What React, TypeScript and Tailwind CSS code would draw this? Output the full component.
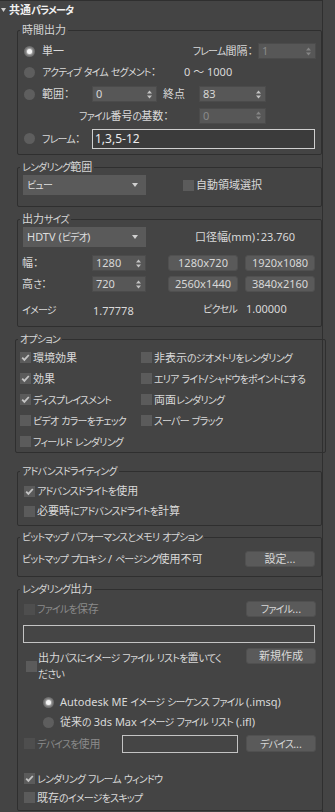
import React from "react";

function J({ s }: { s: string }) {
  const parts = s.split(/([\u3040-\u30FF]+)/);
  return (
    <>
      {parts.map((p, i) =>
        /[\u3040-\u30FF]/.test(p) ? (
          <span key={i} className="text-[10px] tracking-[-0.8px]">
            {p}
          </span>
        ) : (
          <React.Fragment key={i}>{p}</React.Fragment>
        )
      )}
    </>
  );
}

function Arrows({ dim }: { dim?: boolean }) {
  return (
    <svg width="5" height="9" viewBox="0 0 5 9" className="shrink-0">
      <polygon points="0,3.5 2.5,0.5 5,3.5" fill={dim ? "#858585" : "#c4c4c4"} />
      <polygon points="0,5.5 2.5,8.5 5,5.5" fill={dim ? "#858585" : "#c4c4c4"} />
    </svg>
  );
}

function Spin({ cls, value, dim }: { cls: string; value: string; dim?: boolean }) {
  return (
    <div
      className={`${cls} shrink-0 h-[16px] bg-[#575757] border border-[#4b4b4b] flex items-center justify-between pl-[3px] pr-[4px] ${
        dim ? "text-[#8a8a8a]" : "text-[#d8d8d8]"
      }`}
    >
      <span>{value}</span>
      <Arrows dim={dim} />
    </div>
  );
}

function Drop({ text }: { text: string }) {
  return (
    <div className="w-[123px] h-[20px] shrink-0 bg-[#5a5a5a] flex items-center justify-between pl-[4px] pr-[8px] text-[#dedede]">
      <span className="whitespace-nowrap">
        <J s={text} />
      </span>
      <svg width="6" height="4" viewBox="0 0 6 4">
        <polygon points="0,0 6,0 3,4" fill="#d0d0d0" />
      </svg>
    </div>
  );
}

function Btn({ cls, text }: { cls?: string; text: string }) {
  return (
    <div
      className={`${cls ?? ""} w-[70px] h-[16px] shrink-0 rounded-[3px] bg-[#5a5a5a] border border-[#505050] flex items-center justify-center text-[#d8d8d8] whitespace-nowrap`}
    >
      <J s={text} />
    </div>
  );
}

function Check({ on, dim, cls }: { on?: boolean; dim?: boolean; cls?: string }) {
  return (
    <div
      className={`${cls ?? ""} w-[11px] h-[11px] shrink-0 flex items-center justify-center ${
        dim ? "bg-[#4e4e4e]" : "bg-[#5b5b5b]"
      }`}
    >
      {on && (
        <svg width="11" height="11" viewBox="0 0 11 11">
          <polyline points="2.2,5.6 4.4,7.9 8.8,3" fill="none" stroke="#c4c4c4" strokeWidth="1.8" />
        </svg>
      )}
    </div>
  );
}

function Radio({ on }: { on?: boolean }) {
  return on ? (
    <div className="w-[11px] h-[11px] shrink-0 rounded-full bg-[#6b6b6b] flex items-center justify-center">
      <div className="w-[5px] h-[5px] rounded-full bg-[#f4f4f4] shadow-[0_0_2px_1px_rgba(255,255,255,0.55)]" />
    </div>
  ) : (
    <div className="w-[11px] h-[11px] shrink-0 rounded-full bg-[#5e5e5e]" />
  );
}

function Group({ title, cls, children }: { title: string; cls: string; children: React.ReactNode }) {
  return (
    <fieldset className={`block border border-[#2f2f2f] rounded-[2px] ${cls}`}>
      <legend className="ml-[2px] px-[2px] leading-[14px] text-[#d6d6d6] whitespace-nowrap">
        <J s={title} />
      </legend>
      {children}
    </fieldset>
  );
}

function L({ s, cls }: { s: string; cls?: string }) {
  return (
    <span className={`${cls ?? ""} whitespace-nowrap`}>
      <J s={s} />
    </span>
  );
}

function CRow({ on, dim, label, h }: { on?: boolean; dim?: boolean; label: string; h: string }) {
  return (
    <div className={`${h} flex items-center`}>
      <Check on={on} dim={dim} />
      <L s={label} cls={`ml-[2px] ${dim ? "text-[#8a8a8a]" : ""}`} />
    </div>
  );
}

export default function App() {
  return (
    <div className="w-[335px] h-[812px] overflow-hidden bg-[#444444] flex items-start text-[11px] leading-[14px] text-[#d9d9d9] font-['Noto_Sans','Noto_Sans_CJK_JP',sans-serif] [font-feature-settings:'palt']">
      <div className="w-[323px] h-[812px] shrink-0 border-r border-t border-[#2f2f2f]">
        {/* title */}
        <div className="h-[22px] pt-[2px]">
          <div className="h-[14px] flex items-center pl-[1px]">
            <svg width="5" height="4" viewBox="0 0 5 4">
              <polygon points="0,0 5,0 2.5,4" fill="#cfcfcf" />
            </svg>
            <L s="共通パラメータ" cls="ml-[3px] font-bold text-[#f0f0f0]" />
          </div>
        </div>

        {/* 時間出力 */}
        <Group title="時間出力" cls="ml-[17px] w-[305px]">
          <div className="pt-[4px] pb-[3px]">
            <div className="h-[20px] flex items-center pl-[6px] pr-[5px]">
              <Radio on />
              <L s="単一" cls="ml-[7px]" />
              <L s="フレーム間隔：" cls="ml-auto" />
              <Spin cls="w-[58px] ml-[5px]" value="1" dim />
            </div>
            <div className="h-[22px] flex items-center pl-[6px]">
              <Radio />
              <L s="アクティブ タイム セグメント：" cls="ml-[7px] w-[142px] shrink-0" />
              <span className="whitespace-nowrap">0 〜 1000</span>
            </div>
            <div className="h-[22px] flex items-center pl-[6px]">
              <Radio />
              <L s="範囲：" cls="ml-[7px] w-[50px] shrink-0" />
              <Spin cls="w-[65px]" value="0" />
              <L s="終点" cls="ml-[6px] w-[36px] shrink-0" />
              <Spin cls="w-[67px]" value="83" />
            </div>
            <div className="h-[21px] flex items-center pl-[61px]">
              <L s="ファイル番号の基数：" cls="w-[120px] shrink-0" />
              <Spin cls="w-[67px]" value="0" dim />
            </div>
            <div className="h-[25px] flex items-center pl-[6px]">
              <Radio />
              <L s="フレーム：" cls="ml-[7px] w-[50px] shrink-0" />
              <div className="w-[223px] h-[20px] shrink-0 bg-[#3b3b3b] border border-[#cfcfcf] pl-[2px] flex items-center text-[#ececec] text-[12px]">
                1,3,5-12
              </div>
            </div>
          </div>
        </Group>

        {/* レンダリング範囲 */}
        <Group title="レンダリング範囲" cls="ml-[17px] w-[305px] mt-[5px]">
          <div className="pt-[1px] pb-[11px] pl-[5px] flex items-center">
            <Drop text="ビュー" />
            <Check cls="ml-[37px]" />
            <L s="自動領域選択" cls="ml-[2px]" />
          </div>
        </Group>

        {/* 出力サイズ */}
        <Group title="出力サイズ" cls="ml-[17px] w-[305px] mt-[5px]">
          <div className="pt-[1px] pb-[10px]">
            <div className="flex items-center pl-[5px]">
              <Drop text="HDTV (ビデオ)" />
              <L s="口径幅(mm)：23.760" cls="ml-[49px]" />
            </div>
            <div className="mt-[8px] h-[16px] flex items-center pl-[4px]">
              <L s="幅：" cls="w-[70px] shrink-0" />
              <Spin cls="w-[54px]" value="1280" />
              <Btn cls="ml-[22px]" text="1280x720" />
              <Btn cls="ml-[7px]" text="1920x1080" />
            </div>
            <div className="mt-[5px] h-[16px] flex items-center pl-[4px]">
              <L s="高さ：" cls="w-[70px] shrink-0" />
              <Spin cls="w-[54px]" value="720" />
              <Btn cls="ml-[22px]" text="2560x1440" />
              <Btn cls="ml-[7px]" text="3840x2160" />
            </div>
            <div className="mt-[10px] h-[14px] flex items-center pl-[4px]">
              <L s="イメージ" cls="w-[71px] shrink-0 mt-[2px]" />
              <span className="w-[110px] shrink-0 mt-[3px]">1.77778</span>
              <L s="ピクセル" cls="w-[43px] shrink-0" />
              <span>1.00000</span>
            </div>
          </div>
        </Group>

        {/* オプション */}
        <Group title="オプション" cls="ml-[15px] w-[311px] mt-[5px]">
          <div className="pt-[1px] pl-[4px] flex">
            <div className="w-[121px] shrink-0 flex flex-col">
              <CRow h="h-[21px]" on label="環境効果" />
              <CRow h="h-[21px]" on label="効果" />
              <CRow h="h-[21px]" on label="ディスプレイスメント" />
              <CRow h="h-[21px]" label="ビデオ カラーをチェック" />
              <CRow h="h-[21px]" label="フィールド レンダリング" />
            </div>
            <div className="flex flex-col">
              <CRow h="h-[21px]" label="非表示のジオメトリをレンダリング" />
              <CRow h="h-[21px]" label="エリア ライト/シャドウをポイントにする" />
              <CRow h="h-[21px]" label="両面レンダリング" />
              <CRow h="h-[21px]" label="スーパー ブラック" />
            </div>
          </div>
        </Group>

        {/* アドバンスドライティング */}
        <Group title="アドバンスドライティング" cls="ml-[17px] w-[305px] mt-[11px]">
          <div className="pt-[3px] pb-[4px] pl-[6px]">
            <CRow h="h-[20px]" on label="アドバンスドライトを使用" />
            <CRow h="h-[20px]" label="必要時にアドバンスドライトを計算" />
          </div>
        </Group>

        {/* ビットマップ */}
        <Group title="ビットマップ パフォーマンスとメモリ オプション" cls="ml-[17px] w-[305px] mt-[4px]">
          <div className="pt-[7px] pb-[9px] pl-[4px] pr-[6px]">
            <div className="h-[16px] flex items-center">
              <L s="ビットマップ プロキシ / ページング使用不可" />
              <Btn cls="ml-auto" text="設定..." />
            </div>
          </div>
        </Group>

        {/* レンダリング出力 */}
        <Group title="レンダリング出力" cls="ml-[17px] w-[305px] mt-[5px]">
          <div className="pt-[5px] pb-[3px] pr-[6px]">
            <div className="h-[16px] flex items-center pl-[6px]">
              <Check dim />
              <L s="ファイルを保存" cls="ml-[2px] text-[#8a8a8a]" />
              <Btn cls="ml-auto" text="ファイル..." />
            </div>
            <div className="mt-[8px] ml-[5px] w-[292px] h-[18px] bg-[#454545] border border-[#c4c4c4]" />
            <div className="mt-[5px] flex items-start pl-[8px]">
              <div className="mt-[2px] flex items-center">
                <Check />
                <span className="ml-[1px] leading-[15px] whitespace-nowrap">
                  <J s="出力パスにイメージ ファイル リストを置いてく" />
                  <br />
                  <J s="ださい" />
                </span>
              </div>
              <Btn cls="ml-auto" text="新規作成" />
            </div>
            <div className="mt-[10px] h-[20px] flex items-center pl-[25px]">
              <Radio on />
              <L s="Autodesk ME イメージ シーケンス ファイル (.imsq)" cls="ml-[6px]" />
            </div>
            <div className="h-[20px] flex items-center pl-[25px]">
              <Radio />
              <L s="従来の 3ds Max イメージ ファイル リスト (.ifl)" cls="ml-[6px]" />
            </div>
            <div className="mt-[3px] h-[17px] flex items-center pl-[6px]">
              <Check dim />
              <L s="デバイスを使用" cls="ml-[2px] w-[85px] shrink-0 text-[#8a8a8a]" />
              <div className="w-[116px] h-[18px] shrink-0 bg-[#454545] border border-[#c4c4c4]" />
              <Btn cls="ml-[8px] h-[17px]" text="デバイス..." />
            </div>
            <div className="mt-[17px] pl-[6px]">
              <CRow h="h-[19px]" on label="レンダリング フレーム ウィンドウ" />
              <CRow h="h-[19px]" label="既存のイメージをスキップ" />
            </div>
          </div>
        </Group>
      </div>
      <div className="flex-1" />
    </div>
  );
}
